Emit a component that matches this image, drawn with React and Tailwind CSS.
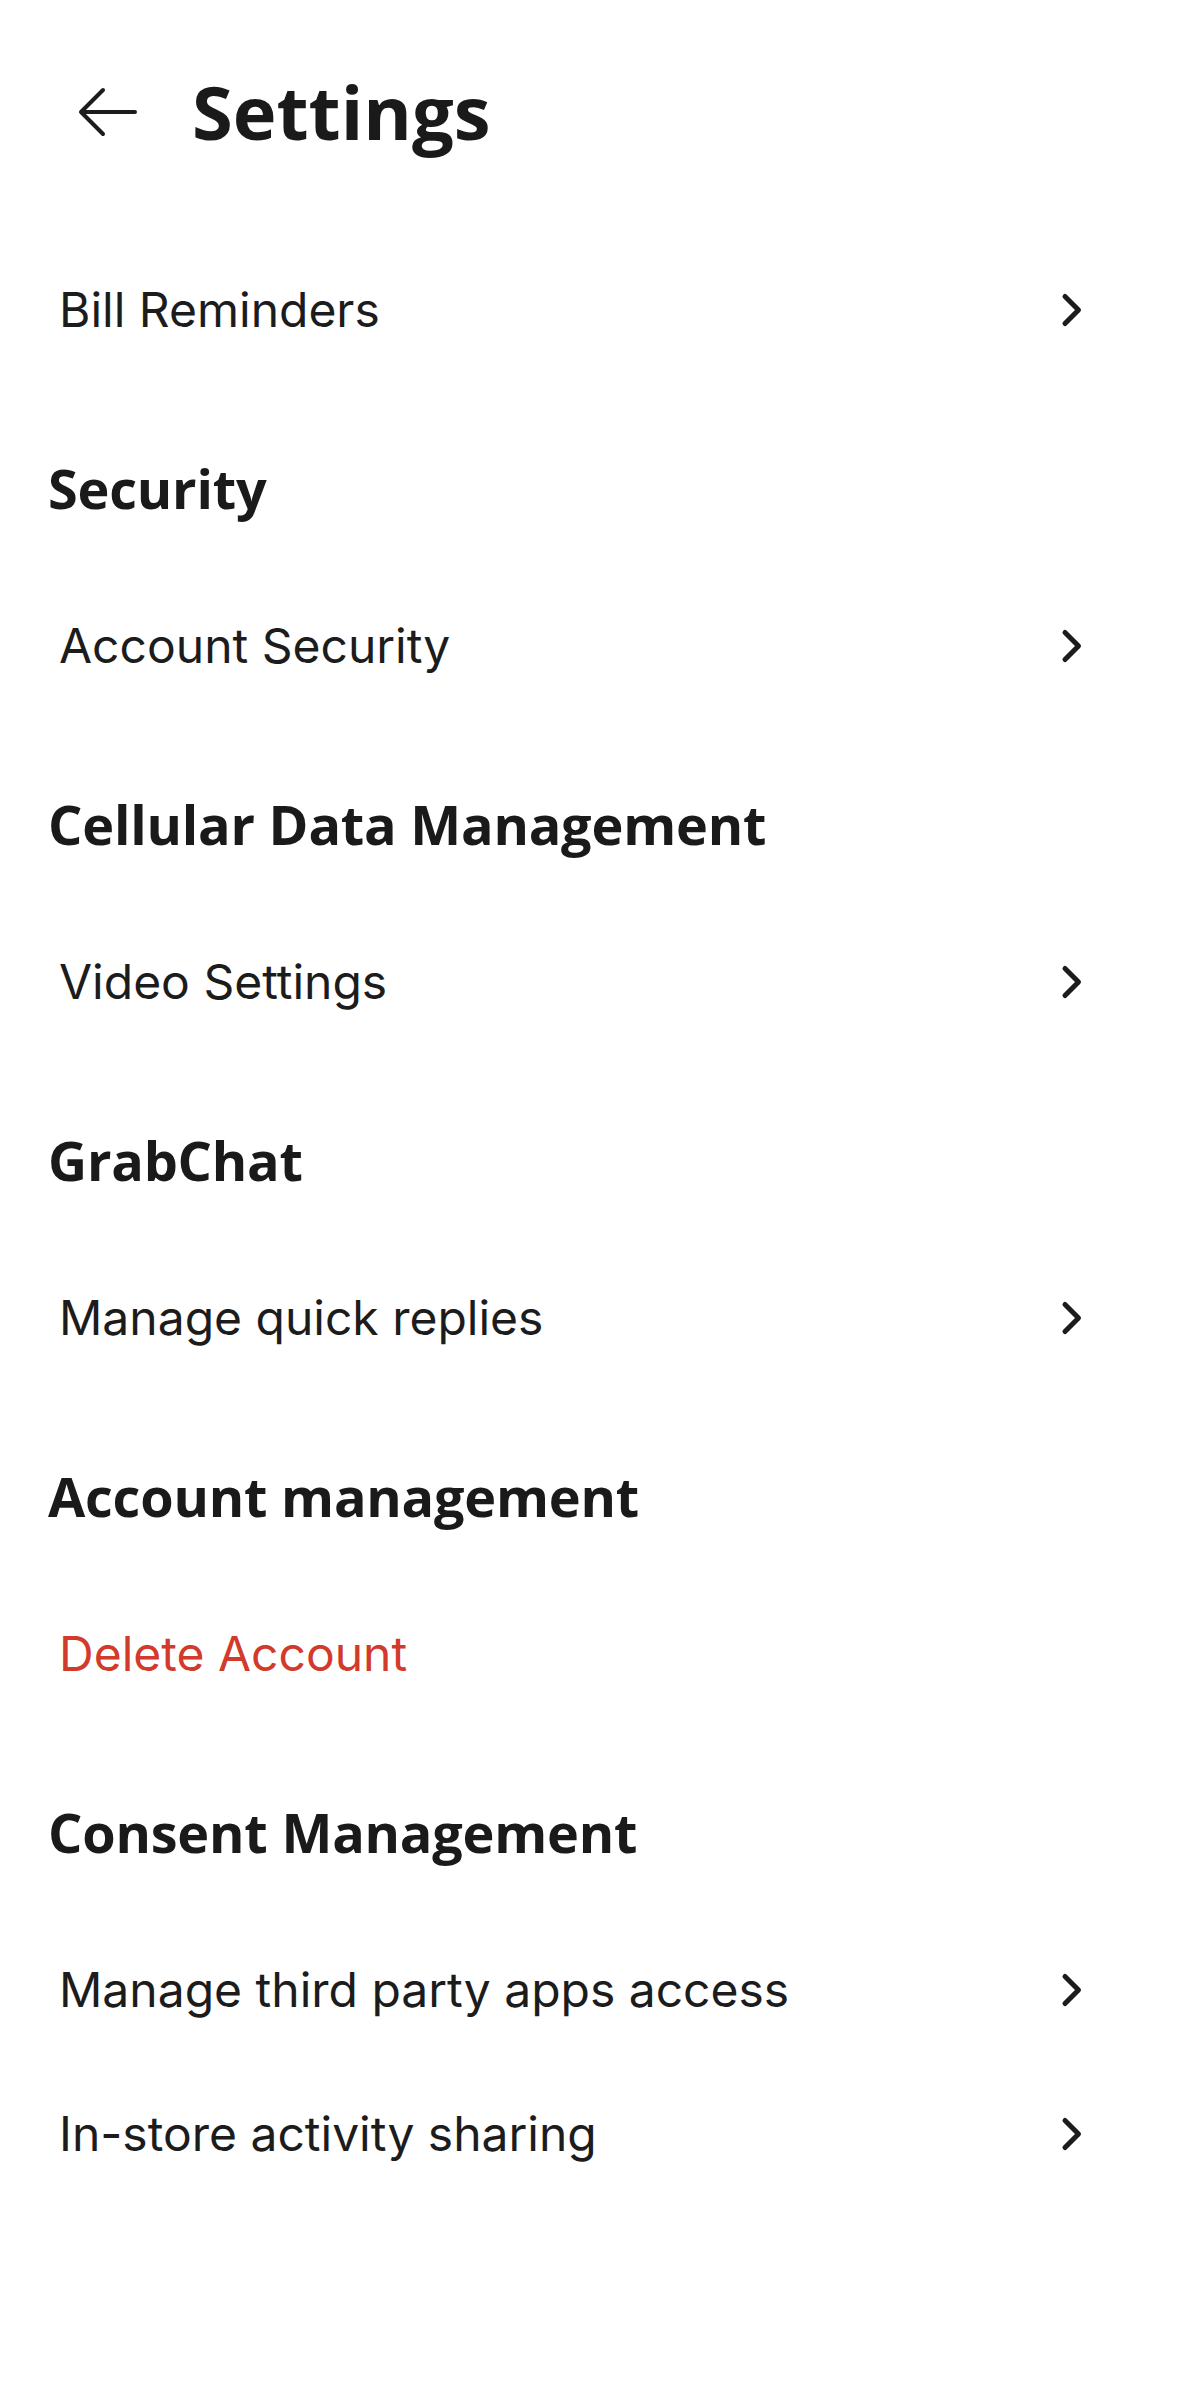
const sections = [
  { title: null, items: [{ label: 'Bill Reminders' }] },
  { title: 'Security', items: [{ label: 'Account Security' }] },
  { title: 'Cellular Data Management', items: [{ label: 'Video Settings' }] },
  { title: 'GrabChat', items: [{ label: 'Manage quick replies' }] },
  { title: 'Account management', items: [{ label: 'Delete Account', danger: true }] },
  {
    title: 'Consent Management',
    items: [{ label: 'Manage third party apps access' }, { label: 'In-store activity sharing' }],
  },
];

function Chevron() {
  return (
    <svg width="24" height="36" viewBox="0 0 24 36" fill="none" className="shrink-0">
      <path d="M5 4.5L18.5 18L5 31.5" stroke="#1c1c1c" strokeWidth="5" strokeLinecap="round" strokeLinejoin="round" />
    </svg>
  );
}

function Row({ label, danger }) {
  return (
    <div className="h-[144px] flex items-center justify-between pl-[59px] pr-[95px]">
      <span
        className={`text-[48px] leading-none font-['Inter',sans-serif] ${danger ? 'text-[#d23a2b]' : 'text-[#1c1c1c]'}`}
      >
        {label}
      </span>
      {!danger && <Chevron />}
    </div>
  );
}

export default function App() {
  return (
    <div className="min-h-screen bg-white">
      <div className="h-[224px] flex items-center pl-[78px]">
        <svg width="60" height="50" viewBox="0 0 60 50" fill="none" className="shrink-0">
          <path d="M57 25H3M25 3L3 25L25 47" stroke="#1c1c1c" strokeWidth="4" strokeLinecap="round" strokeLinejoin="round" />
        </svg>
        <h1 className="ml-[54px] text-[74px] leading-none font-bold text-[#1a1a1a] font-['Open_Sans',sans-serif]">
          Settings
        </h1>
      </div>

      <div className="pt-[14px]">
        {sections.map((section, i) => (
          <div key={i}>
            {section.title && (
              <div className="h-[192px] pt-[76px] pl-[48px]">
                <h2 className="h-[60px] flex items-center text-[54px] leading-none font-bold text-[#1a1a1a] font-['Open_Sans',sans-serif] tracking-[-0.2px]">
                  {section.title}
                </h2>
              </div>
            )}
            {section.items.map((item) => (
              <Row key={item.label} {...item} />
            ))}
          </div>
        ))}
      </div>
    </div>
  );
}
